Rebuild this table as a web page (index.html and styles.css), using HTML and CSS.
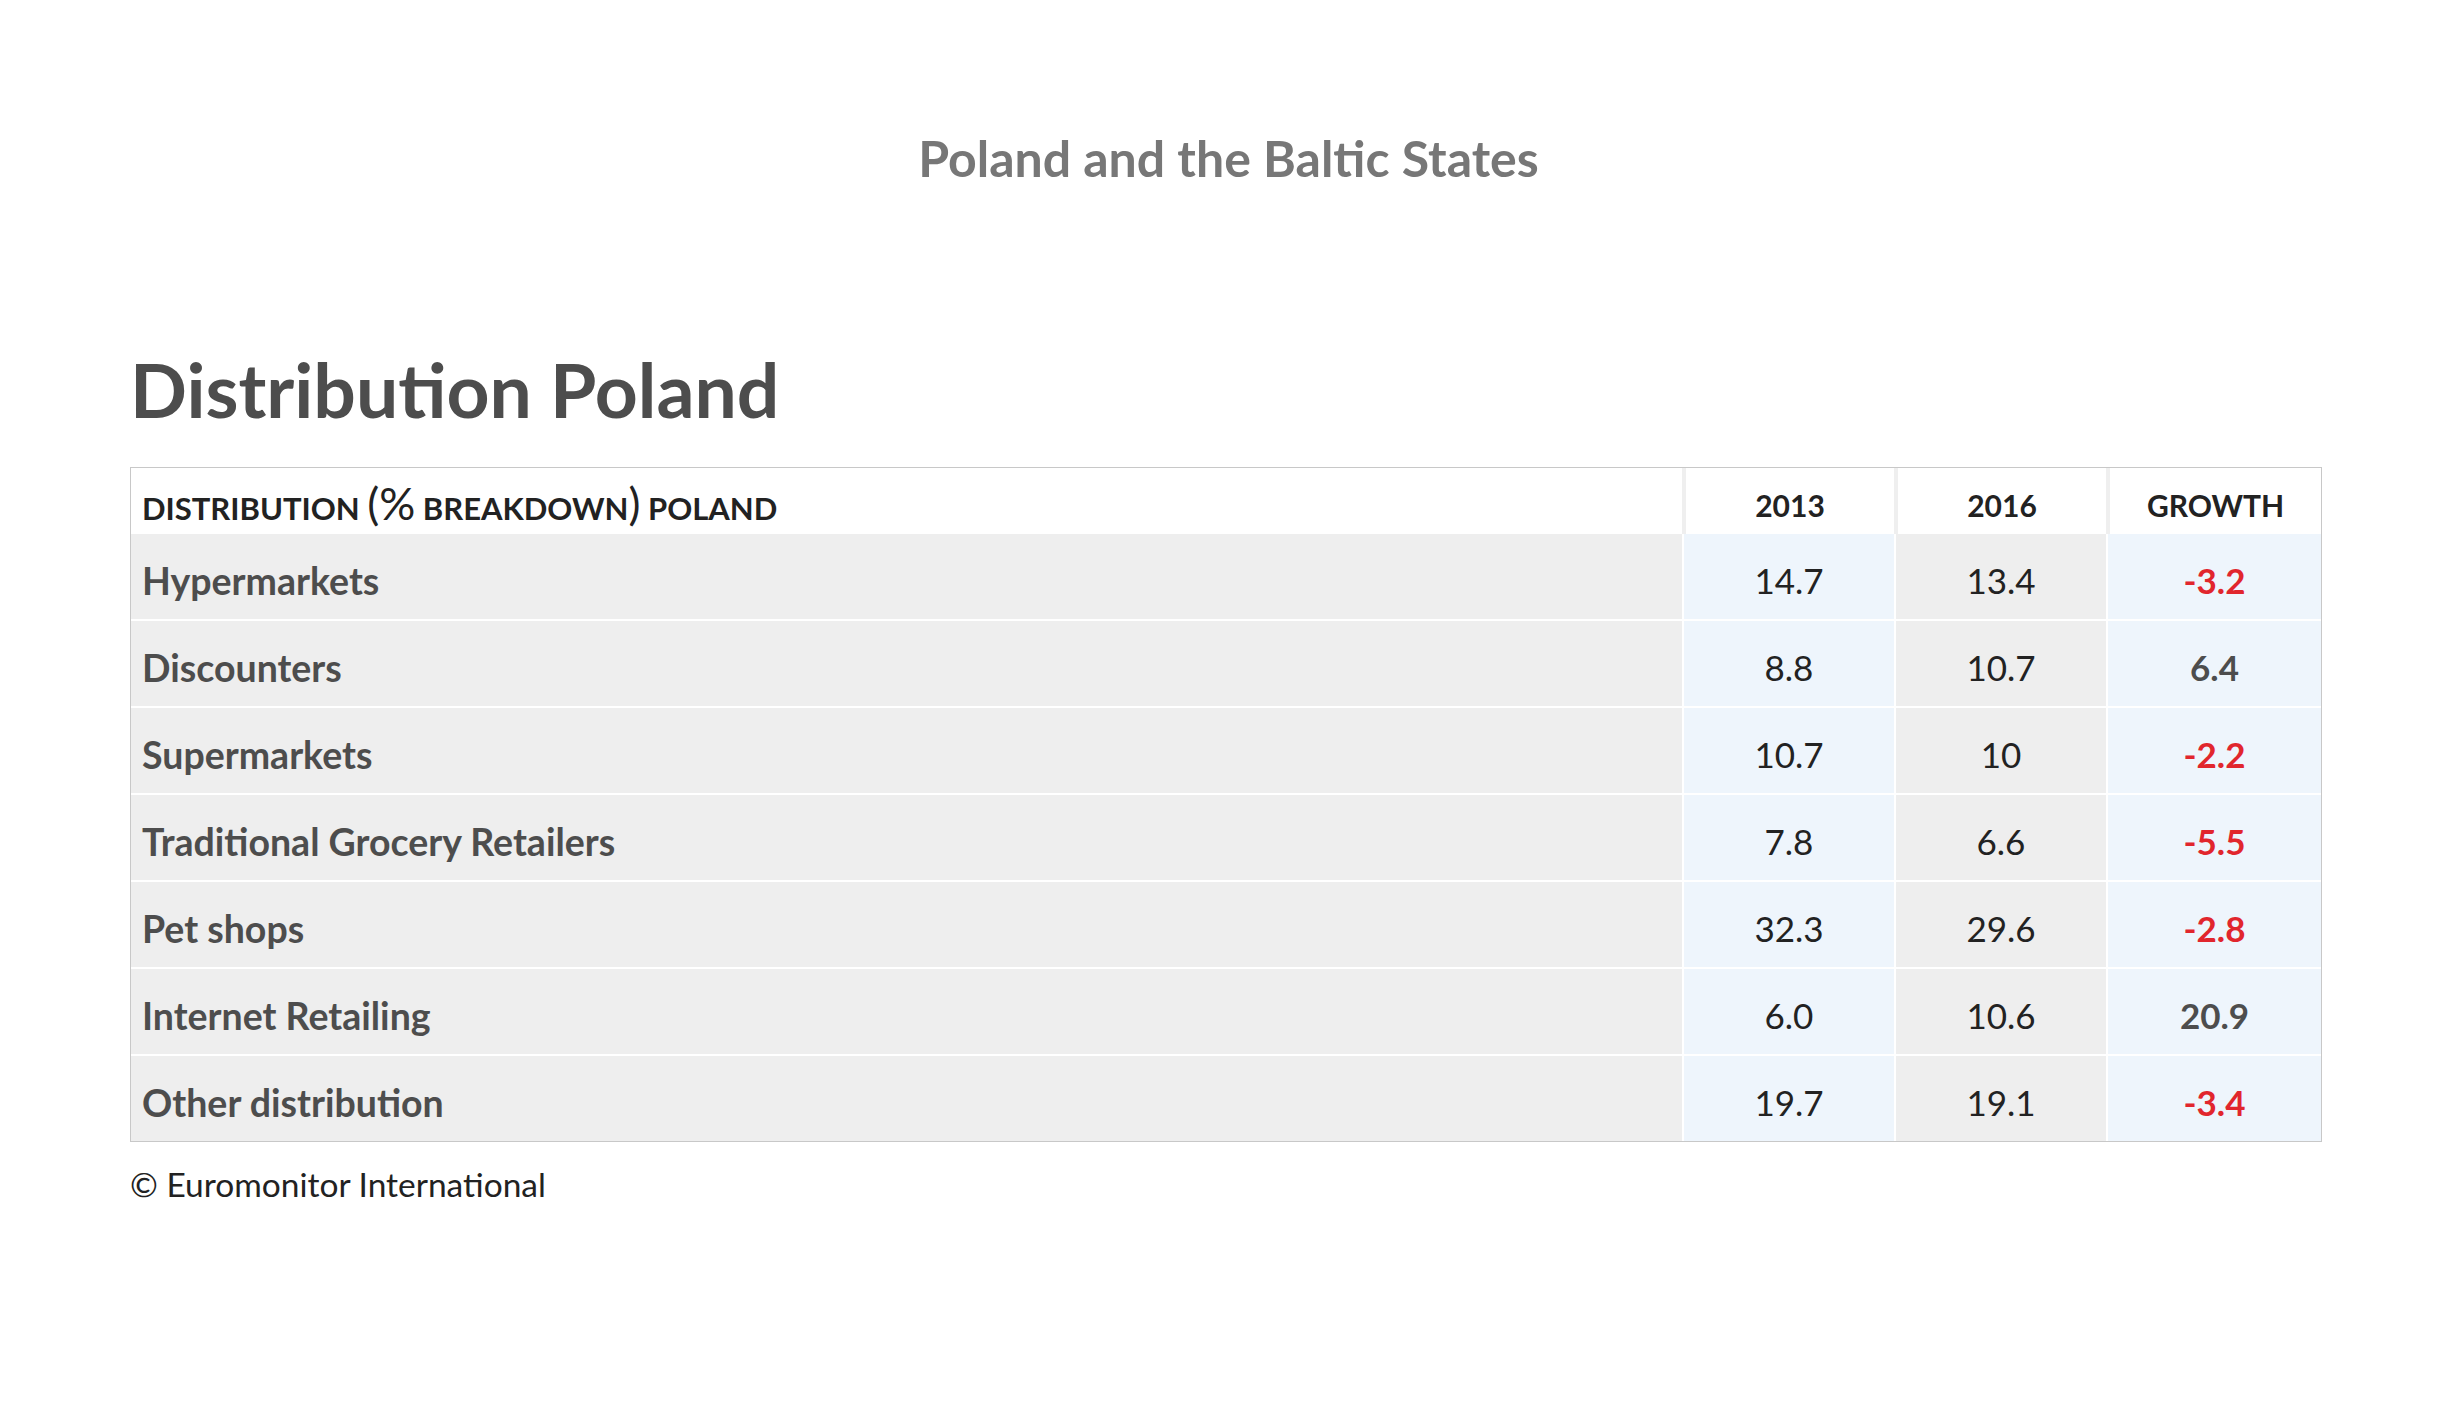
FILE: index.html
```html
<!DOCTYPE html>
<html lang="en">
<head>
<meta charset="utf-8">
<title>Distribution Poland</title>
<link rel="stylesheet" href="styles.css">
</head>
<body>
<div class="page">
  <div class="region">Poland and the Baltic States</div>
  <div class="content">
    <h1 class="heading">Distribution Poland</h1>
    <table class="dist">
      <colgroup>
        <col class="c-label">
        <col class="c-num">
        <col class="c-num">
        <col class="c-growth">
      </colgroup>
      <thead>
        <tr>
          <th class="h-label">DISTRIBUTION <span class="paren">(%</span> BREAKDOWN<span class="paren">)</span> POLAND</th>
          <th>2013</th>
          <th>2016</th>
          <th>GROWTH</th>
        </tr>
      </thead>
      <tbody>
        <tr><td class="label">Hypermarkets</td><td class="num">14.7</td><td class="num alt">13.4</td><td class="growth neg">-3.2</td></tr>
        <tr><td class="label">Discounters</td><td class="num">8.8</td><td class="num alt">10.7</td><td class="growth">6.4</td></tr>
        <tr><td class="label">Supermarkets</td><td class="num">10.7</td><td class="num alt">10</td><td class="growth neg">-2.2</td></tr>
        <tr><td class="label">Traditional Grocery Retailers</td><td class="num">7.8</td><td class="num alt">6.6</td><td class="growth neg">-5.5</td></tr>
        <tr><td class="label">Pet shops</td><td class="num">32.3</td><td class="num alt">29.6</td><td class="growth neg">-2.8</td></tr>
        <tr><td class="label">Internet Retailing</td><td class="num">6.0</td><td class="num alt">10.6</td><td class="growth">20.9</td></tr>
        <tr><td class="label">Other distribution</td><td class="num">19.7</td><td class="num alt">19.1</td><td class="growth neg">-3.4</td></tr>
      </tbody>
    </table>
    <p class="source">© Euromonitor International</p>
  </div>
</div>
</body>
</html>
```
FILE: styles.css
```css
* { box-sizing: border-box; }
html, body { margin: 0; padding: 0; background: #fff; }
body { font-family: Lato, "Noto Sans", sans-serif; color: #222; }

.page { padding-top: 128px; }

.region {
  height: 60px;
  line-height: 60px;
  text-align: center;
  font-size: 50px;
  font-weight: 700;
  color: #777;
}

.content {
  width: 2192px;
  margin: 156px 0 0 130px;
}

.heading {
  margin: 0;
  height: 90px;
  line-height: 90px;
  font-size: 75px;
  font-weight: 700;
  color: #4d4d4d;
}

.dist {
  margin-top: 33px;
  width: 2192px;
  table-layout: fixed;
  border-collapse: separate;
  border-spacing: 0;
  border: 1px solid #c8c8c8;
}
.c-label { width: 1551px; }
.c-num { width: 212px; }
.c-growth { width: 215px; }

.dist th {
  height: 66px;
  padding: 8px 0 0;
  background: #fff;
  border-left: 4px solid #efefef;
  font-size: 30px;
  font-weight: 700;
  color: #222;
  text-align: center;
  vertical-align: middle;
  line-height: 40px;
}
.dist th.h-label {
  border-left: none;
  text-align: left;
  padding-left: 11px;
  font-size: 31px;
}
.paren { font-size: 45px; font-weight: 400; line-height: 40px; }

.dist td {
  height: 85px;
  padding: 7px 0 0;
  border-left: 2px solid #fff;
  background: #eef5fc;
  font-size: 35px;
  text-align: center;
  vertical-align: middle;
  color: #222;
}
.dist tbody tr + tr td { border-top: 2px solid #fff; height: 87px; }
.dist td.label {
  border-left: none;
  background: #eeeeee;
  text-align: left;
  padding-left: 11px;
  font-size: 37.5px;
  font-weight: 700;
  color: #4d4d4d;
}
.dist td.alt { background: #eeeeee; }
.dist td.growth { font-weight: 700; color: #4d4d4d; }
.dist td.growth.neg { color: #e1262d; }

.source {
  margin: 22px 0 0;
  font-size: 33.5px;
  line-height: 40px;
  color: #222;
}
```
